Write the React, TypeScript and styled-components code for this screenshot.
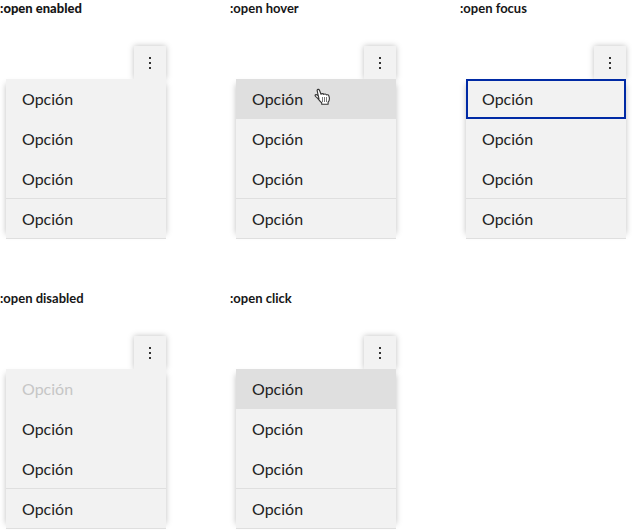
import React from "react";
import styled, { createGlobalStyle, css } from "styled-components";

type ItemState = "enabled" | "hover" | "focus" | "disabled" | "click";

const GlobalStyle = createGlobalStyle`
  *, *::before, *::after { box-sizing: border-box; }
  body { margin: 0; background: #fff; color: #161616; font-family: Lato, "Liberation Sans", sans-serif; }
`;

const Board = styled.main`
  display: grid;
  grid-template-columns: repeat(auto-fill, 172px);
  column-gap: 58px;
  row-gap: 50px;
`;

const Example = styled.section`
  display: flex;
  flex-direction: column;
  min-height: 240px;
`;

const Title = styled.h2<{ $strong: boolean }>`
  margin: 0 0 30px;
  font-size: 13px;
  line-height: 16px;
  font-weight: ${(p) => (p.$strong ? 900 : 700)};
`;

const Overflow = styled.div`
  display: flex;
  flex-direction: column;
  align-items: flex-end;
  width: 160px;
  margin-left: 6px;
`;

const Trigger = styled.button`
  display: flex;
  justify-content: center;
  width: 32px;
  height: 33px;
  padding: 9px 0 0;
  border: 0;
  background: #f2f2f2;
  box-shadow: 0 0 6px rgba(0, 0, 0, 0.25);
`;

const Menu = styled.ul`
  position: relative;
  width: 100%;
  margin: 0;
  padding: 0;
  list-style: none;
  background: #f2f2f2;

  &::before {
    content: "";
    position: absolute;
    z-index: -1;
    inset: 5px 0;
    box-shadow: 0 0 6px rgba(0, 0, 0, 0.25);
  }
`;

const Entry = styled.li<{ $divided?: boolean }>`
  height: 40px;
  border-bottom: ${(p) => (p.$divided ? "1px solid #dfdfdf" : "0")};
`;

const states = {
  enabled: css``,
  hover: css`background: #dfdfdf;`,
  click: css`background: #dfdfdf;`,
  focus: css`outline: 2px solid #002aa5; outline-offset: -2px;`,
  disabled: css`color: #c6c6c6;`,
};

const Option = styled.button<{ $state: ItemState }>`
  display: flex;
  align-items: flex-start;
  width: 100%;
  height: 100%;
  padding: 10px 16px 0;
  border: 0;
  background: transparent;
  color: #222;
  font: 400 16px/20px Lato, "Liberation Sans", sans-serif;
  ${(p) => states[p.$state]}
`;

const Pointer = styled.svg`
  flex: none;
  margin: -1px 0 0 11px;
`;

function Dots() {
  return (
    <svg width="16" height="16" viewBox="0 0 16 16" fill="#333" aria-hidden="true">
      <path d="M7 2h2v2H7zM7 7h2v2H7zM7 12h2v2H7z" />
    </svg>
  );
}

function HandPointer() {
  return (
    <Pointer width="18" height="19" viewBox="0 0 18 19" aria-hidden="true">
      <path
        d="M5 11 3.2 2.8C2.8 1.2 5 .8 5.5 2.3L7 6.3C7.6 5.3 9.2 5.4 9.8 6.4c.8-.8 2.2-.5 2.6.5.8-.5 2.1 0 2.5 1.1.7 2 .7 4.5-.8 6.2v2H7.7v-1.5C6 13.5 4.8 11.8 3.4 10 1.8 8.8.4 7.7 1.5 6.8 2.5 6.2 3.8 7.4 4.4 8.2z"
        fill="#fff" stroke="#333" strokeWidth="1.1" strokeLinejoin="round"
      />
      <path d="M8.5 9v5M10.5 9v5M12.5 9v5" stroke="#777" fill="none" />
    </Pointer>
  );
}

function OpenMenu({ state }: { state: ItemState }) {
  return (
    <Example>
      <Title $strong={state === "enabled"}>:open {state}</Title>
      <Overflow>
        <Trigger type="button" aria-label="Opciones" aria-expanded="true"><Dots /></Trigger>
        <Menu>
          {[0, 1, 2, 3].map((i) => (
            <Entry key={i} $divided={i > 1}>
              <Option type="button" $state={i === 0 ? state : "enabled"} disabled={i === 0 && state === "disabled"}>
                Opción
                {i === 0 && state === "hover" && <HandPointer />}
              </Option>
            </Entry>
          ))}
        </Menu>
      </Overflow>
    </Example>
  );
}

export default function App() {
  return (
    <>
      <GlobalStyle />
      <Board>
        {(["enabled", "hover", "focus", "disabled", "click"] as ItemState[]).map((s) => <OpenMenu key={s} state={s} />)}
      </Board>
    </>
  );
}
